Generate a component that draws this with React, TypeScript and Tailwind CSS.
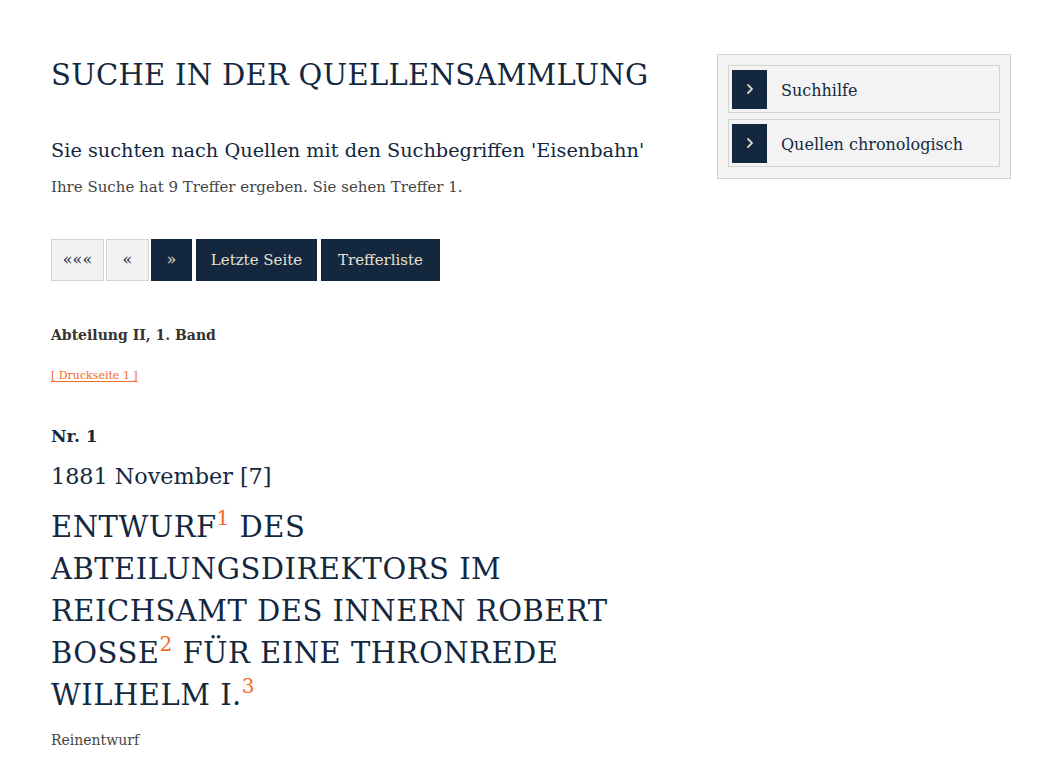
import React from "react";

const serif = { fontFamily: '"DejaVu Serif", "Liberation Serif", serif' };

function Chevron() {
  return (
    <svg width="10" height="12" viewBox="0 0 10 12" fill="none">
      <path d="M3 2 L7 6 L3 10" stroke="#d9d2c3" strokeWidth="1.8" strokeLinecap="round" strokeLinejoin="round" />
    </svg>
  );
}

function SideItem({ label }: { label: string }) {
  return (
    <div className="flex items-center h-[48px] border border-[#d4d4cf] pl-[3px]">
      <div className="w-[35px] h-[39px] bg-[#13283f] flex items-center justify-center">
        <Chevron />
      </div>
      <span className="ml-[14px] pt-[4px] text-[16px] text-[#13283f]">{label}</span>
    </div>
  );
}

function Sup({ n }: { n: string }) {
  return <span className="inline-block text-[#f26b21] text-[20px] leading-none align-[12px]">{n}</span>;
}

export default function App() {
  return (
    <div className="min-h-[772px] bg-white text-[#13283f]" style={serif}>
      <div className="flex pt-[54px] pl-[51px]">
        <div className="w-[620px]">
          <h1 className="text-[29px] leading-[42px] tracking-[0.3px] text-[#13283f]">SUCHE IN DER QUELLENSAMMLUNG</h1>
          <h2 className="text-[19.3px] leading-[28px] mt-[41px] text-[#13283f]">Sie suchten nach Quellen mit den Suchbegriffen 'Eisenbahn'</h2>
          <p className="text-[15px] leading-[24px] mt-[10px] text-[#444]">Ihre Suche hat 9 Treffer ergeben. Sie sehen Treffer 1.</p>

          <div className="flex mt-[40px] h-[42px]">
            <div className="w-[53px] h-[42px] border border-[#d4d4cf] bg-[#f2f2f2] flex items-center justify-center text-[16px] text-[#13283f]">«««</div>
            <div className="w-[43px] h-[42px] ml-[2px] border border-[#d4d4cf] bg-[#f2f2f2] flex items-center justify-center text-[16px] text-[#13283f]">«</div>
            <div className="w-[41px] h-[42px] ml-[2px] bg-[#13283f] flex items-center justify-center text-[16px] text-[#e8e0d2]">»</div>
            <div className="w-[121px] h-[42px] ml-[4px] bg-[#13283f] flex items-center justify-center text-[15px] text-[#e8e0d2]">Letzte Seite</div>
            <div className="w-[119px] h-[42px] ml-[4px] bg-[#13283f] flex items-center justify-center text-[15px] text-[#e8e0d2]">Trefferliste</div>
          </div>

          <p className="mt-[42px] text-[14px] leading-[24px] font-bold text-[#333]">Abteilung II, 1. Band</p>
          <p className="mt-[19px] text-[11px] leading-[20px]">
            <span className="text-[#f26b21] underline underline-offset-2">[ Druckseite 1 ]</span>
          </p>

          <p className="mt-[36px] text-[17px] leading-[28px] font-bold text-[#13283f]">Nr. 1</p>
          <p className="mt-[9px] text-[22.3px] leading-[34px] text-[#13283f]">1881 November [7]</p>
          <h3 className="mt-[13px] text-[29px] leading-[42px] tracking-[0.5px] text-[#13283f] w-[600px] flex flex-col">
            <span>ENTWURF<Sup n="1" /> DES</span>
            <span>ABTEILUNGSDIREKTORS IM</span>
            <span>REICHSAMT DES INNERN ROBERT</span>
            <span>BOSSE<Sup n="2" /> FÜR EINE THRONREDE</span>
            <span>WILHELM I.<Sup n="3" /></span>
          </h3>
          <p className="mt-[14px] text-[14px] leading-[20px] text-[#444]">Reinentwurf</p>
        </div>

        <div className="ml-[46px] w-[294px] h-[125px] border border-[#d4d4cf] bg-[#f3f3f3] p-[10px] flex flex-col gap-[6px]">
          <SideItem label="Suchhilfe" />
          <SideItem label="Quellen chronologisch" />
        </div>
      </div>
    </div>
  );
}
